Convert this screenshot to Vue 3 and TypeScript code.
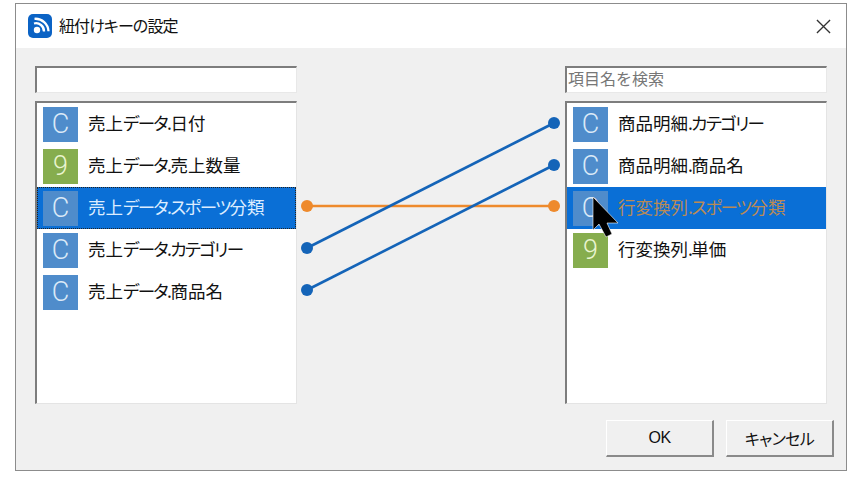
<template>
  <div class="window">
    <header class="titlebar">
      <svg class="app-icon" viewBox="0 0 24 24" width="24" height="24">
        <rect x="0" y="0" width="24" height="24" rx="5" fill="#0b63c5" />
        <circle cx="9" cy="16" r="3.2" fill="#fff" />
        <path d="M6 9.5a8 8 0 0 1 10 8M6.5 4.8a13 13 0 0 1 14 12.5" fill="none" stroke="#fff" stroke-width="2.3" />
      </svg>
      <span class="title">紐付けキーの設定</span>
      <svg class="close" viewBox="0 0 16 16" width="15" height="15">
        <path d="M1 1l14 14M15 1L1 15" stroke="#333" stroke-width="1.4" fill="none" />
      </svg>
    </header>

    <main class="body">
      <div class="columns">
        <section class="column">
          <input class="search" type="text" />
          <ul class="list">
            <li v-for="item in leftItems" :key="item.label" class="row" :class="{ selected: item.selected, focused: item.selected }">
              <span class="type" :class="item.type === '9' ? 'num' : 'chr'">{{ item.type }}</span>
              <span class="label" :aria-label="item.label">
                <span v-for="(run, i) in runs(item.label)" :key="i" :class="{ kana: isKana(run) }">{{ run }}</span>
              </span>
            </li>
          </ul>
        </section>

        <section class="column">
          <input class="search" type="text" placeholder="項目名を検索" />
          <ul class="list">
            <li v-for="item in rightItems" :key="item.label" class="row" :class="{ selected: item.selected, linked: item.selected }">
              <span class="type" :class="item.type === '9' ? 'num' : 'chr'">{{ item.type }}</span>
              <span class="label" :aria-label="item.label">
                <span v-for="(run, i) in runs(item.label)" :key="i" :class="{ kana: isKana(run) }">{{ run }}</span>
              </span>
            </li>
          </ul>
        </section>
      </div>

      <footer class="actions">
        <button class="btn" type="button">OK</button>
        <button class="btn" type="button">キャンセル</button>
      </footer>
    </main>

    <!-- link lines sit over the lists, coordinates relative to the window -->
    <svg class="links" width="832" height="468" viewBox="0 0 832 468">
      <g v-for="link in links" :key="link.y1" :stroke="link.color" :fill="link.color">
        <line :x1="291" :y1="link.y1" :x2="538" :y2="link.y2" stroke-width="2.6" />
        <circle :cx="291" :cy="link.y1" r="6" stroke="none" />
        <circle :cx="538" :cy="link.y2" r="6" stroke="none" />
      </g>
    </svg>

    <svg class="cursor" viewBox="0 0 28 42" width="28" height="42">
      <path d="M1 1V34L7 28 14 41 20 38 15 27H26Z" fill="#000" stroke="#fff" stroke-width="0.6" />
    </svg>
  </div>
</template>

<script setup lang="ts">
interface Item {
  type: "C" | "9";
  label: string;
  selected?: boolean;
}

const leftItems: Item[] = [
  { type: "C", label: "売上データ.日付" },
  { type: "9", label: "売上データ.売上数量" },
  { type: "C", label: "売上データ.スポーツ分類", selected: true },
  { type: "C", label: "売上データ.カテゴリー" },
  { type: "C", label: "売上データ.商品名" },
];

const rightItems: Item[] = [
  { type: "C", label: "商品明細.カテゴリー" },
  { type: "C", label: "商品明細.商品名" },
  { type: "C", label: "行変換列.スポーツ分類", selected: true },
  { type: "9", label: "行変換列.単価" },
];

const links = [
  { y1: 202, y2: 202, color: "#ee8a2c" },
  { y1: 244, y2: 119, color: "#1464b8" },
  { y1: 286, y2: 161, color: "#1464b8" },
];

// the UI font in the shot has narrow katakana, so kana runs get tightened
const runs = (s: string) => s.match(/[\u30a0-\u30ff.]+|[^\u30a0-\u30ff.]+/g) ?? [];
const isKana = (s: string) => /^[\u30a0-\u30ff.]/.test(s);
</script>

<style>
body {
  background: #fff;
}
</style>

<style scoped>
.window {
  position: relative;
  box-sizing: border-box;
  width: 832px;
  height: 468px;
  margin: 3px 0 0 15px;
  border: 1px solid #8c8c8c;
  background: #fff;
  font-family: "Noto Sans CJK JP", "Liberation Sans", sans-serif;
  font-feature-settings: "palt";
  color: #111;
  overflow: hidden;
}
.titlebar {
  display: flex;
  align-items: center;
  height: 44px;
  padding: 0 15px 0 12px;
}
.app-icon {
  flex: none;
}
.title {
  margin-left: 7px;
  margin-top: -2px;
  font-size: 16px;
  letter-spacing: -0.9px;
  flex: 1;
}
.body {
  height: 422px;
  box-sizing: border-box;
  padding: 18px 19px 0 19px;
  background: #f0f0f0;
}
.columns {
  display: flex;
  justify-content: space-between;
  width: 792px;
}
.column {
  display: flex;
  flex-direction: column;
  gap: 8px;
  width: 262px;
}
.search {
  box-sizing: border-box;
  width: 100%;
  height: 27px;
  padding: 0 1px 5px;
  border: none;
  border-top: 2px solid #7d7d7d;
  border-left: 2px solid #7d7d7d;
  border-right: 1px solid #e8e8e8;
  border-bottom: 1px solid #e8e8e8;
  background: #fff;
  font: 16px "Noto Sans CJK JP", sans-serif;
  outline: none;
}
.search::placeholder {
  color: #777;
}
.list {
  box-sizing: border-box;
  height: 303px;
  margin: 0;
  padding: 0;
  list-style: none;
  border-top: 2px solid #7d7d7d;
  border-left: 2px solid #7d7d7d;
  border-right: 1px solid #e4e4e4;
  border-bottom: 1px solid #e4e4e4;
  background: #fff;
}
.row {
  display: flex;
  align-items: center;
  box-sizing: border-box;
  height: 42px;
  padding-left: 6px;
  font-size: 17.5px;
}
.type {
  display: flex;
  align-items: center;
  justify-content: center;
  flex: none;
  width: 35px;
  height: 35px;
  font-family: Roboto, "Liberation Sans", sans-serif;
  font-size: 27px;
  font-weight: 300;
  color: #dbe9f7;
}
.chr {
  background: #4f8ccb;
}
.num {
  background: #86ad4e;
  color: #eaf5d0;
}
.label {
  margin-left: 10px;
  margin-top: -3px;
  white-space: nowrap;
}
.kana {
  letter-spacing: -1.6px;
}
.selected {
  background: #0a6fd6;
  color: #dcecff;
}
.focused {
  outline: 1px dotted #222;
  outline-offset: -1px;
}
.linked .label {
  color: #b98a55;
}
.selected .type {
  background: #4f8ccb;
}
.actions {
  display: flex;
  justify-content: flex-end;
  gap: 12px;
  margin-top: 16px;
  margin-right: -7px;
}
.btn {
  box-sizing: border-box;
  width: 108px;
  height: 37px;
  border: none;
  border-right: 2px solid #8a8a8a;
  border-bottom: 2px solid #8a8a8a;
  border-top: 1px solid #fff;
  border-left: 1px solid #fff;
  background: #f0f0f0;
  font: 16px "Liberation Sans", "Noto Sans CJK JP", sans-serif;
  font-feature-settings: "palt";
  letter-spacing: -0.6px;
  color: #111;
  padding: 0;
}
.links {
  position: absolute;
  left: 0;
  top: 0;
  pointer-events: none;
}
.cursor {
  position: absolute;
  left: 576px;
  top: 192px;
}
</style>
